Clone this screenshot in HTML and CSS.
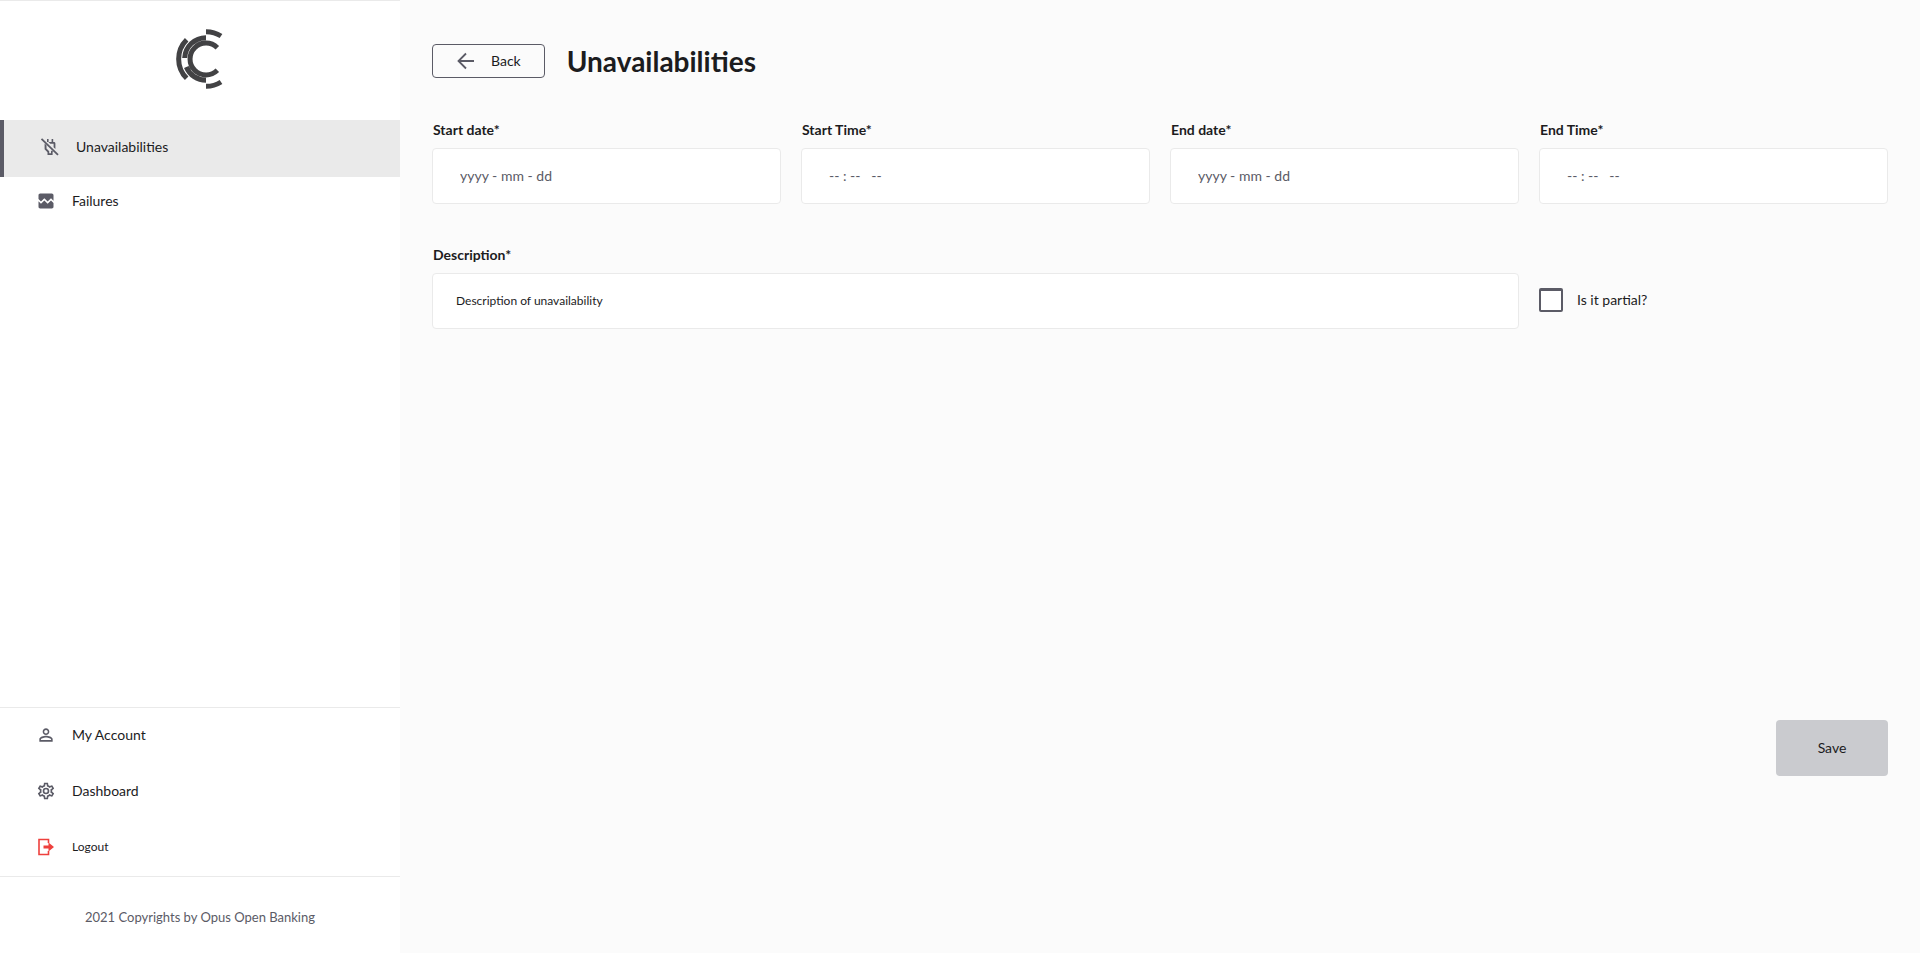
FILE: index.html
```html
<!DOCTYPE html>
<html lang="en">
<head>
<meta charset="utf-8">
<meta name="viewport" content="width=device-width, initial-scale=1">
<title>Unavailabilities</title>
<link rel="stylesheet" href="styles.css">
</head>
<body>
<div class="app">
  <aside class="sidebar">
    <div class="brand">
      <svg class="logo" viewBox="-90 -90 144 180" role="img" aria-label="Opus Open Banking">
        <path d="M34 -34A48 48 0 1 0 34 34M0 -64A64 64 0 0 0 -64 -3M-59 24A64 64 0 0 0 0 64M-58 -58A82 82 0 0 0 -58 58M0 -82A82 82 0 0 1 45 -69M0 82A82 82 0 0 0 45 69"/>
      </svg>
    </div>
    <nav class="nav">
      <a class="nav-link nav-link-active" href="#unavailabilities" aria-current="page">
        <svg class="icon" viewBox="0 0 20 20" aria-hidden="true">
          <path d="M7.8 2v3M12.4 2v4" fill="none" stroke="currentColor" stroke-width="1.6"/>
          <path d="M8.4 5H14c.8 0 1.4.6 1.4 1.4V12l-1.8-1.8V6.8h-3.400zM4.600 6.400l1.900 1.900v3.200L9.200 14.200v2h1.800v-2l.8-.8 1.300 1.300-.5.500v2.800H7.500v-2.800L4.600 12.300z"/>
          <path d="M1.500 1.800l16.500 16" fill="none" stroke="currentColor" stroke-width="1.800"/>
        </svg>
        <span>Unavailabilities</span>
      </a>
      <a class="nav-link" href="#failures">
        <svg class="icon" viewBox="0 0 24 24" aria-hidden="true"><path d="M21 5v6.590l-3-3.010-4 4.010-4-4-4 4-3-3.010V5c0-1.100.9-2 2-2h14c1.100 0 2 .9 2 2zm-3 6.420l3 3.010V19c0 1.100-.9 2-2 2H5c-1.100 0-2-.9-2-2v-6.580l3 2.990 4-4 4 4 4-3.990z"/></svg>
        <span>Failures</span>
      </a>
    </nav>
    <nav class="nav account-nav" aria-label="Account">
      <a class="nav-link" href="#account">
        <svg class="icon" viewBox="0 0 24 24" aria-hidden="true"><path d="M12 5.900c1.160 0 2.100.94 2.100 2.100s-.94 2.100-2.100 2.100S9.900 9.160 9.900 8s.94-2.100 2.100-2.100m0 9c2.970 0 6.100 1.460 6.100 2.100v1.100H5.900V17c0-.64 3.130-2.100 6.100-2.100M12 4C9.790 4 8 5.790 8 8s1.790 4 4 4 4-1.790 4-4-1.790-4-4-4zm0 9c-2.670 0-8 1.340-8 4v3h16v-3c0-2.660-5.330-4-8-4z"/></svg>
        <span>My Account</span>
      </a>
      <a class="nav-link" href="#dashboard">
        <svg class="icon" viewBox="0 0 24 24" aria-hidden="true"><path d="M12 8a4 4 0 0 1 4 4 4 4 0 0 1-4 4 4 4 0 0 1-4-4 4 4 0 0 1 4-4m0 2a2 2 0 0 0-2 2 2 2 0 0 0 2 2 2 2 0 0 0 2-2 2 2 0 0 0-2-2m-2 12c-.25 0-.46-.18-.5-.42l-.37-2.650c-.63-.25-1.170-.59-1.690-.99l-2.490 1.010c-.22.08-.49 0-.61-.22l-2-3.460a.493.493 0 0 1 .12-.64l2.110-1.660L4.500 12l.07-1-2.110-1.630a.493.493 0 0 1-.12-.64l2-3.460c.12-.22.39-.31.61-.22l2.490 1c.52-.39 1.060-.73 1.690-.98l.37-2.650c.04-.24.25-.42.5-.42h4c.25 0 .46.18.5.42l.37 2.650c.63.25 1.170.59 1.690.98l2.490-1c.22-.09.49 0 .61.22l2 3.460c.13.22.07.49-.12.64L19.430 11l.07 1-.07 1 2.110 1.630c.19.15.25.42.12.64l-2 3.460c-.12.22-.39.31-.61.22l-2.490-1c-.52.39-1.060.73-1.690.98l-.37 2.650c-.04.24-.25.42-.5.42h-4m1.250-18-.37 2.610c-1.200.25-2.260.89-3.030 1.780L5.440 7.350l-.75 1.300L6.800 10.200a5.550 5.550 0 0 0 0 3.600l-2.120 1.560.75 1.300 2.430-1.040c.77.88 1.820 1.520 3.010 1.760l.37 2.620h1.520l.37-2.610c1.190-.25 2.240-.89 3.010-1.770l2.430 1.040.75-1.300-2.120-1.550c.4-1.170.4-2.440 0-3.610l2.110-1.550-.75-1.300-2.410 1.040a5.420 5.420 0 0 0-3.030-1.770L12.750 4h-1.500z"/></svg>
        <span>Dashboard</span>
      </a>
      <a class="nav-link nav-link-small" href="#logout">
        <svg class="icon icon-danger" viewBox="0 0 20 20" aria-hidden="true">
          <path d="M12.500 6V2.500h-9.500v15h9.500V14" fill="none" stroke="currentColor" stroke-width="1.600"/>
          <path d="M7.500 8.500h5V5.500l5.500 4.500-5.500 4.500v-3h-5z"/>
        </svg>
        <span>Logout</span>
      </a>
    </nav>
    <footer class="copyright">2021 Copyrights by Opus Open Banking</footer>
  </aside>

  <main class="main">
    <header class="page-header">
      <button class="back" type="button">
        <svg class="icon" viewBox="0 0 20 20" aria-hidden="true"><path d="M18 10H3M10 2.500L2.500 10l7.500 7.500" fill="none" stroke="currentColor" stroke-width="1.800"/></svg>
        <span>Back</span>
      </button>
      <h1 class="title">Unavailabilities</h1>
    </header>
    <form class="form">
      <div class="fields">
        <div class="field">
          <label for="start-date">Start date*</label>
          <input class="input" id="start-date" type="text" placeholder="yyyy - mm - dd">
        </div>
        <div class="field">
          <label for="start-time">Start Time*</label>
          <input class="input" id="start-time" type="text" placeholder="-- : --&nbsp;&nbsp; --">
        </div>
        <div class="field">
          <label for="end-date">End date*</label>
          <input class="input" id="end-date" type="text" placeholder="yyyy - mm - dd">
        </div>
        <div class="field">
          <label for="end-time">End Time*</label>
          <input class="input" id="end-time" type="text" placeholder="-- : --&nbsp;&nbsp; --">
        </div>
        <div class="field field-wide">
          <label for="description">Description*</label>
          <input class="input input-description" id="description" type="text" placeholder="Description of unavailability">
        </div>
        <div class="check">
          <input class="checkbox" id="partial" type="checkbox">
          <label for="partial">Is it partial?</label>
        </div>
      </div>
      <button class="save" type="submit">Save</button>
    </form>
  </main>
</div>
</body>
</html>
```

FILE: styles.css
```css
*,
*::before,
*::after {
  box-sizing: border-box;
}

body {
  margin: 0;
  background: #fbfbfb;
  color: #1c1c1e;
  font: 14px/24px Lato, "Open Sans", sans-serif;
}

.app {
  display: flex;
  min-height: 100vh;
}

.sidebar {
  display: flex;
  flex: 0 0 400px;
  flex-direction: column;
  background: #fff;
  border-top: 1px solid #eaeaea;
}

.brand {
  display: flex;
  justify-content: center;
  padding: 28px 0 31px;
}

.logo {
  width: 48px;
  height: 60px;
  fill: none;
  stroke: #424244;
  stroke-width: 15;
}

.nav {
  display: flex;
  flex-direction: column;
}

.nav-link {
  display: flex;
  align-items: center;
  gap: 16px;
  padding: 12px 36px;
  color: inherit;
  text-decoration: none;
}

.nav-link-active {
  padding: 15px 36px 18px;
  background: #eaeaea;
  border-left: 4px solid #5b5b66;
}

.nav-link-small {
  font-size: 12px;
}

.icon {
  flex: none;
  width: 20px;
  height: 20px;
  color: #5b5b66;
  fill: currentColor;
}

.icon-danger {
  color: #ee403d;
}

.account-nav {
  margin-top: auto;
  border-top: 1px solid #eaeaea;
  border-bottom: 1px solid #eaeaea;
}

.account-nav .nav-link {
  padding: 15px 36px 17px;
}

.copyright {
  padding: 28px 0 24px;
  color: #5b5b66;
  font-size: 13px;
  text-align: center;
}

.main {
  display: flex;
  flex: 1;
  flex-direction: column;
  min-width: 0;
  padding: 41px 32px 177px;
}

.page-header {
  display: flex;
  align-items: center;
  gap: 22px;
}

.back {
  display: flex;
  align-items: center;
  gap: 15px;
  padding: 4px 23px;
  background: transparent;
  border: 1px solid #5b5b66;
  border-radius: 4px;
  color: inherit;
  font: inherit;
}

.title {
  margin: 0;
  font-size: 28px;
  line-height: 40px;
}

.form {
  display: flex;
  flex: 1;
  flex-direction: column;
  margin-top: 37px;
}

.fields {
  display: grid;
  grid-template-columns: repeat(4, 1fr);
  gap: 39px 20px;
}

.field {
  display: flex;
  flex-direction: column;
  gap: 6px;
  font-weight: 700;
}

.field-wide {
  grid-column: span 3;
}

.field label {
  padding-left: 1px;
}

.input {
  width: 100%;
  height: 56px;
  padding: 0 27px 2px;
  background: #fff;
  border: 1px solid #eaeaea;
  border-radius: 4px;
  color: inherit;
  font: inherit;
  font-weight: 400;
}

.input::placeholder {
  color: #5b5b66;
  opacity: 1;
}

.input-description {
  padding: 0 23px 2px;
  font-size: 12px;
}

.input-description::placeholder {
  color: #1c1c1e;
}

.check {
  display: flex;
  align-items: center;
  align-self: end;
  gap: 14px;
  height: 56px;
  padding-bottom: 2px;
}

.checkbox {
  appearance: none;
  width: 24px;
  height: 24px;
  margin: 0;
  background: #fff;
  border: 2px solid #5b5b66;
  border-top-width: 3px;
  border-radius: 2px;
}

.checkbox:checked {
  background: #5b5b66;
}

.save {
  align-self: flex-end;
  width: 112px;
  height: 56px;
  margin-top: auto;
  background: #cacbcf;
  border: 0;
  border-radius: 4px;
  color: inherit;
  font: inherit;
}
```
